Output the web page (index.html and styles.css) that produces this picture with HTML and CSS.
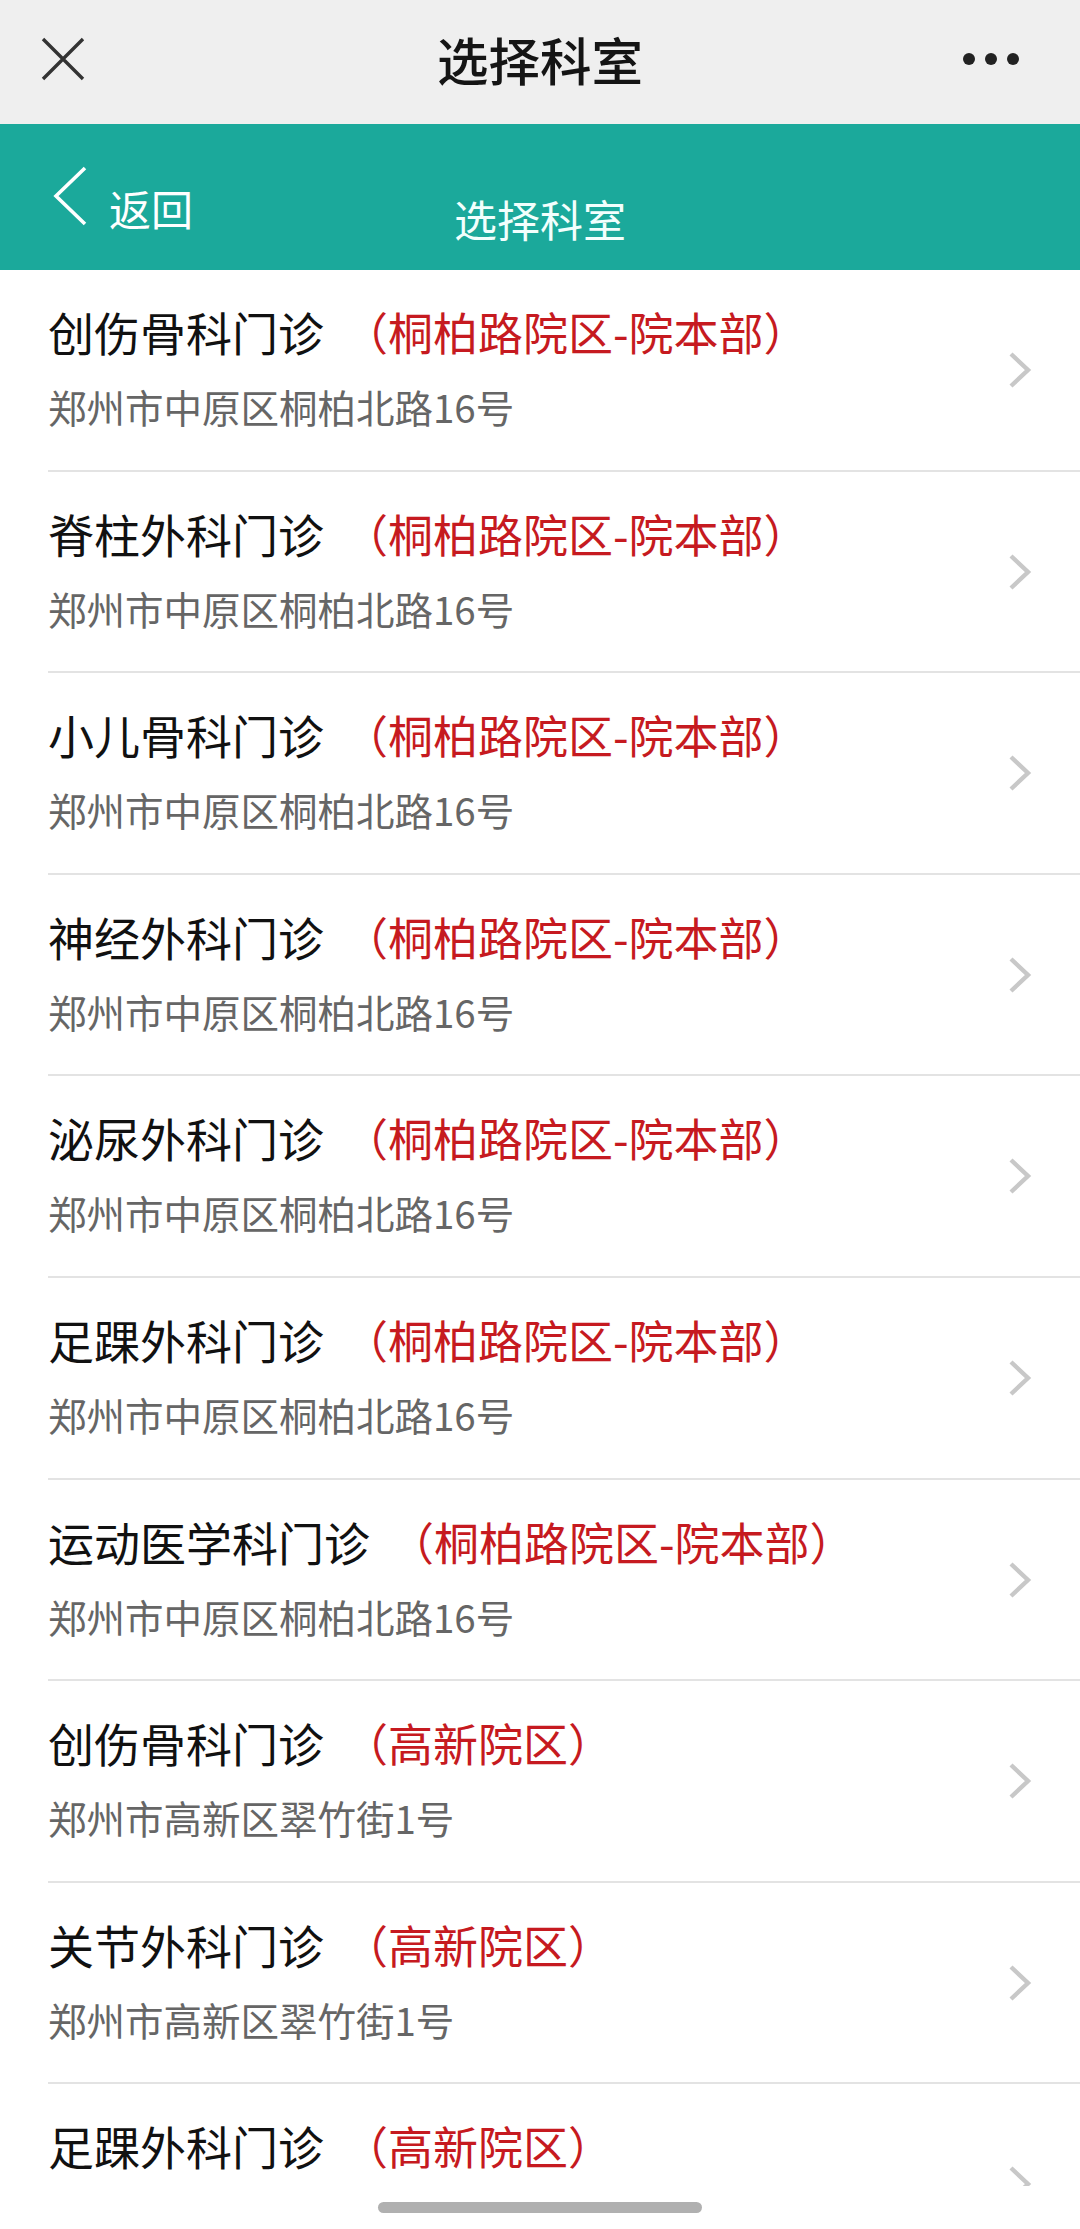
FILE: index.html
```html
<!DOCTYPE html>
<html lang="zh-CN">

<head>
    <meta charset="utf-8">
    <meta name="viewport" content="width=device-width, initial-scale=1.0">
    <title>选择科室</title>
    <link rel="stylesheet" href="styles.css">
</head>

<body>

    <header class="topbar">
        <svg class="luk" width="46" height="46" viewBox="0 0 46 46">
            <path d="M3 3 L43 43 M43 3 L3 43" stroke="#333" stroke-width="3.4" fill="none" />
        </svg>
        <h1>选择科室</h1>
        <div class="mere">
            <span></span><span></span><span></span>
        </div>
    </header>

    <nav class="navbar">
        <a class="tilbage" href="#">
            <svg width="36" height="62" viewBox="0 0 36 62">
                <path d="M32 2 L3 30 L32 58" stroke="#fff" stroke-width="3.6" fill="none" />
            </svg>
            <span>返回</span>
        </a>
        <h2>选择科室</h2>
    </nav>

    <ul class="liste">
        <li>
            <div class="raekke">
                <div class="info">
                    <p class="navn">创伤骨科门诊<span class="omraade">（桐柏路院区-院本部）</span></p>
                    <p class="adresse">郑州市中原区桐柏北路16号</p>
                </div>
                <svg class="pil" width="24" height="36" viewBox="0 0 24 36"><path d="M3 2 L20 18 L3 34" /></svg>
            </div>
        </li>
        <li>
            <div class="raekke">
                <div class="info">
                    <p class="navn">脊柱外科门诊<span class="omraade">（桐柏路院区-院本部）</span></p>
                    <p class="adresse">郑州市中原区桐柏北路16号</p>
                </div>
                <svg class="pil" width="24" height="36" viewBox="0 0 24 36"><path d="M3 2 L20 18 L3 34" /></svg>
            </div>
        </li>
        <li>
            <div class="raekke">
                <div class="info">
                    <p class="navn">小儿骨科门诊<span class="omraade">（桐柏路院区-院本部）</span></p>
                    <p class="adresse">郑州市中原区桐柏北路16号</p>
                </div>
                <svg class="pil" width="24" height="36" viewBox="0 0 24 36"><path d="M3 2 L20 18 L3 34" /></svg>
            </div>
        </li>
        <li>
            <div class="raekke">
                <div class="info">
                    <p class="navn">神经外科门诊<span class="omraade">（桐柏路院区-院本部）</span></p>
                    <p class="adresse">郑州市中原区桐柏北路16号</p>
                </div>
                <svg class="pil" width="24" height="36" viewBox="0 0 24 36"><path d="M3 2 L20 18 L3 34" /></svg>
            </div>
        </li>
        <li>
            <div class="raekke">
                <div class="info">
                    <p class="navn">泌尿外科门诊<span class="omraade">（桐柏路院区-院本部）</span></p>
                    <p class="adresse">郑州市中原区桐柏北路16号</p>
                </div>
                <svg class="pil" width="24" height="36" viewBox="0 0 24 36"><path d="M3 2 L20 18 L3 34" /></svg>
            </div>
        </li>
        <li>
            <div class="raekke">
                <div class="info">
                    <p class="navn">足踝外科门诊<span class="omraade">（桐柏路院区-院本部）</span></p>
                    <p class="adresse">郑州市中原区桐柏北路16号</p>
                </div>
                <svg class="pil" width="24" height="36" viewBox="0 0 24 36"><path d="M3 2 L20 18 L3 34" /></svg>
            </div>
        </li>
        <li>
            <div class="raekke">
                <div class="info">
                    <p class="navn">运动医学科门诊<span class="omraade">（桐柏路院区-院本部）</span></p>
                    <p class="adresse">郑州市中原区桐柏北路16号</p>
                </div>
                <svg class="pil" width="24" height="36" viewBox="0 0 24 36"><path d="M3 2 L20 18 L3 34" /></svg>
            </div>
        </li>
        <li>
            <div class="raekke">
                <div class="info">
                    <p class="navn">创伤骨科门诊<span class="omraade">（高新院区）</span></p>
                    <p class="adresse">郑州市高新区翠竹街1号</p>
                </div>
                <svg class="pil" width="24" height="36" viewBox="0 0 24 36"><path d="M3 2 L20 18 L3 34" /></svg>
            </div>
        </li>
        <li>
            <div class="raekke">
                <div class="info">
                    <p class="navn">关节外科门诊<span class="omraade">（高新院区）</span></p>
                    <p class="adresse">郑州市高新区翠竹街1号</p>
                </div>
                <svg class="pil" width="24" height="36" viewBox="0 0 24 36"><path d="M3 2 L20 18 L3 34" /></svg>
            </div>
        </li>
        <li>
            <div class="raekke">
                <div class="info">
                    <p class="navn">足踝外科门诊<span class="omraade">（高新院区）</span></p>
                </div>
                <svg class="pil" width="24" height="36" viewBox="0 0 24 36"><path d="M3 2 L20 18 L3 34" /></svg>
            </div>
        </li>
    </ul>

    <div class="bund">
        <span class="streg"></span>
    </div>

</body>

</html>
```

FILE: styles.css
```css
* {
    box-sizing: border-box;
}

html,
body {
    margin: 0;
    height: 2229px;
    overflow: hidden;
}

body {
    position: relative;
    background: #fff;
    font-family: "Noto Sans CJK SC", "Noto Sans", sans-serif;
}

.topbar {
    height: 124px;
    background: #efefef;
    display: grid;
    grid-template-columns: 1fr auto 1fr;
    align-items: center;
    padding: 0 40px 6px 40px;
}

.topbar h1 {
    margin: 0;
    font-size: 51.5px;
    font-weight: 500;
    color: #151515;
    line-height: 60px;
}

.luk {
    display: block;
}

.mere {
    display: flex;
    gap: 10px;
    justify-self: end;
    margin-right: 21px;
}

.mere span {
    width: 12px;
    height: 12px;
    border-radius: 50%;
    background: #222;
}

.navbar {
    height: 146px;
    background: #1ba99b;
    position: relative;
    display: flex;
    align-items: center;
    padding-left: 53px;
}

.tilbage {
    display: flex;
    align-items: center;
    gap: 20px;
    color: #fff;
    text-decoration: none;
    font-size: 42px;
    line-height: 50px;
}

.tilbage span {
    margin-top: 22px;
}

.navbar h2 {
    position: absolute;
    left: 0;
    right: 0;
    top: 68px;
    margin: 0;
    text-align: center;
    font-size: 43px;
    font-weight: 400;
    line-height: 52px;
    color: #f2fffd;
    pointer-events: none;
}

.liste {
    list-style: none;
    margin: 0;
    padding: 0;
}

.liste li {
    height: 201.6px;
    padding-left: 48px;
}

.raekke {
    height: 100%;
    border-bottom: 2px solid #e3e3e3;
    display: flex;
    align-items: flex-start;
    justify-content: space-between;
    padding: 31px 48px 0 0;
}

.info p {
    margin: 0;
}

.navn {
    font-size: 46px;
    line-height: 60px;
    color: #111;
}

.omraade {
    color: #c61a20;
    font-size: 45px;
    margin-left: 19px;
}

.adresse {
    margin-top: 20px !important;
    font-size: 38.5px;
    line-height: 48px;
    color: #666;
}

.pil {
    margin-top: 51px;
}

.pil path {
    fill: none;
    stroke: #c8c8c8;
    stroke-width: 4.4;
}

.bund {
    position: absolute;
    left: 0;
    right: 0;
    bottom: 0;
    height: 43px;
    background: #fff;
    display: flex;
    justify-content: center;
    padding-top: 16px;
}

.streg {
    width: 324px;
    height: 11px;
    border-radius: 6px;
    background: #b0b0b0;
}
```
